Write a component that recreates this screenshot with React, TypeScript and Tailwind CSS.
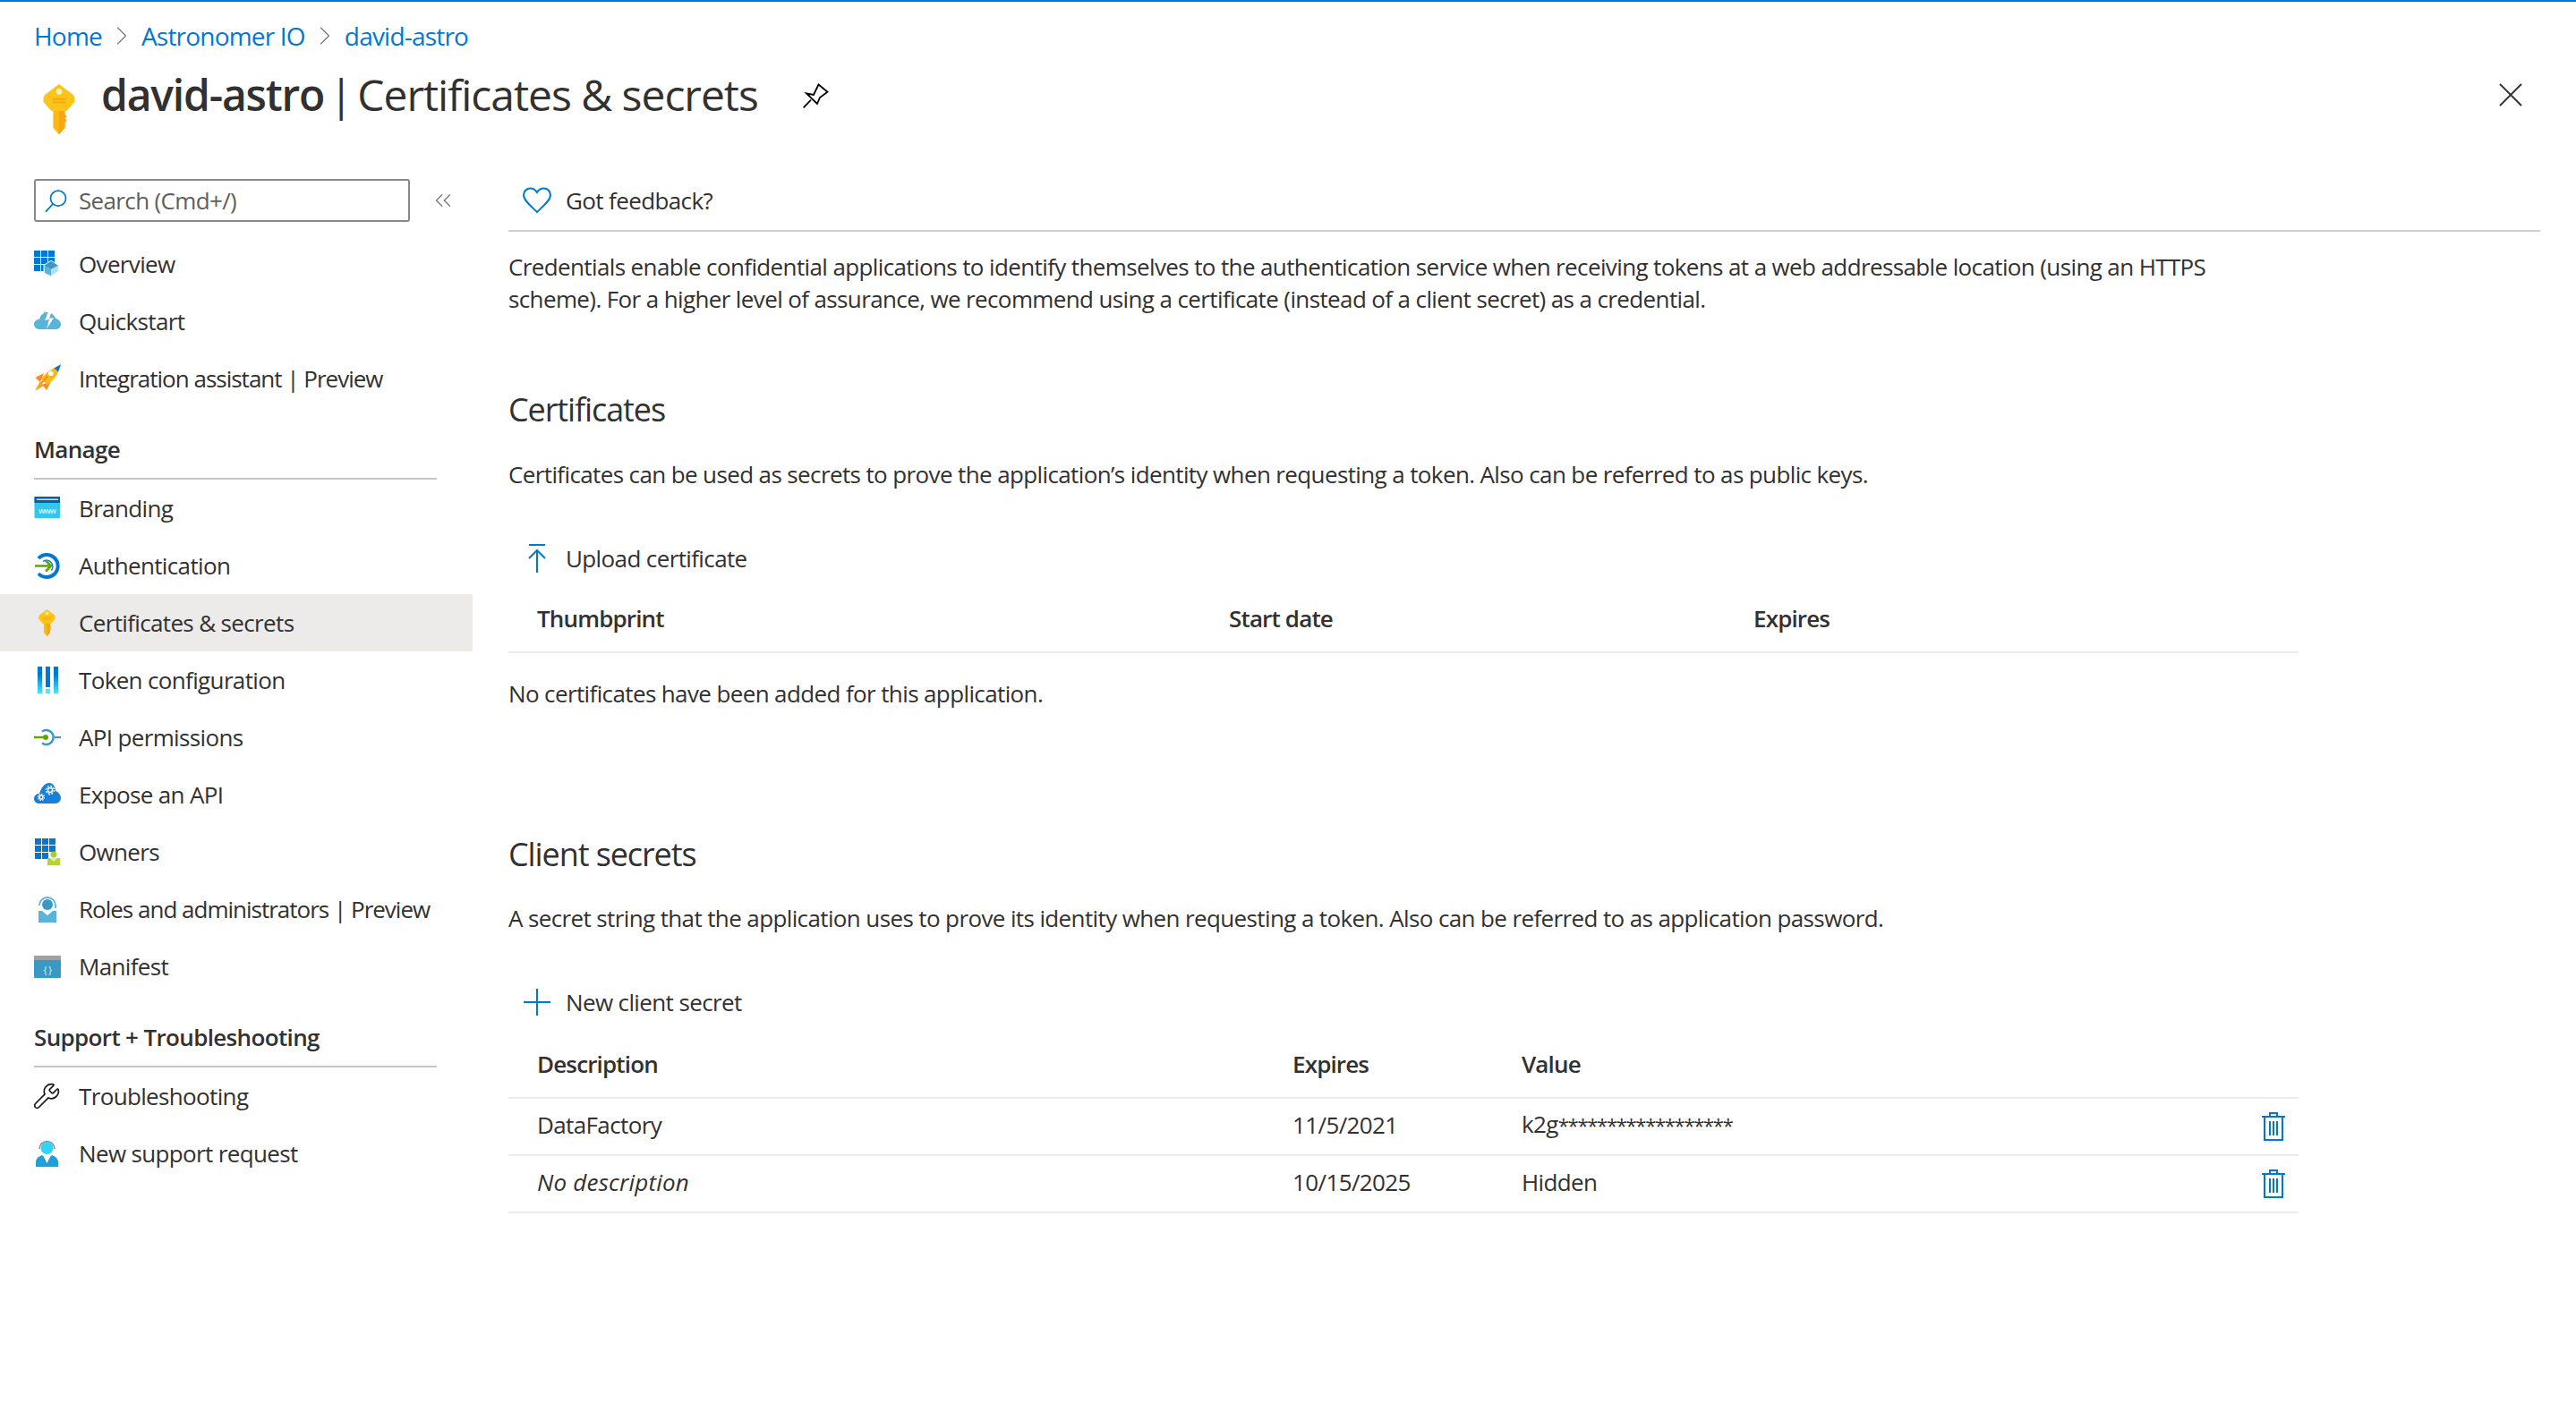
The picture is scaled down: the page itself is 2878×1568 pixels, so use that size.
import { ChevronRight, ChevronsLeft, Wrench, X } from 'lucide-react';
import React from 'react';

const KeyIcon = ({ className }: { className: string }) => (
  <svg viewBox="0 0 32 32" className={className}>
    <path d="M13 14h7v13l-3.500 4L13 27z" fill="#fcb813" />
    <path d="M20 19l1.200 1.200-1.200 1.200 1.200 1.300-1.200 1.300V27l-3.500 4v-17H20z" fill="#f7a711" />
    <path d="M16.500 1 25 7.500Q26.500 10 25.500 12L21 17H12L7.500 12Q6.500 10 8 7.500Z" fill="#fcc419" />
    <circle cx="16.500" cy="5.500" r="1.800" fill="#fff3bf" />
    <path d="M12.500 10h8M12.500 12h8" stroke="#f7a711" strokeWidth="1" />
  </svg>
);

const TrashIcon = () => (
  <svg viewBox="0 0 26 32" className="h-[32px] w-[26px]" fill="none" stroke="#0078d4" strokeWidth="2">
    <path d="M0 5h26M9 5V1h8v4M3 5v26h20V5M9 10v16M13 10v16M17 10v16" />
  </svg>
);

const navIcons: Record<string, React.ReactNode> = {
  overview: (
    <>
      {[2, 10, 18].map((x) =>
        [1, 9, 17].map((y) => <rect key={`${x}-${y}`} x={x} y={y} width="7" height="7" fill="#0078d4" />)
      )}
      <path d="M13.300 17.700L21 12.700l8 5v7l-8 5-7.700-3.500z" fill="#fff" stroke="#fff" strokeWidth="1.500" />
      <path d="M13.300 17.700L21 22v7.300L14 26z" fill="#59b4d9" />
      <path d="M29 17.700L21 22v7.300l8-5z" fill="#b3e0f2" />
      <path d="M13.300 17.700L21 12.700l8 5L21 22z" fill="#3999c6" />
    </>
  ),
  quickstart: (
    <>
      <path d="M8 25C4 25 2 22 2 19.500 2 16 5 14 8 14 9 9 13 6 17 6 21 6 25 9 26 13 29 13.500 32 16 32 19.500 32 23 29 25 26 25Z" fill="#59b4d9" />
      <path d="M19 3L14 15l5-1-3 11 8-13-5 1 3-9z" fill="#fff" />
      <path d="M14 4l-2 6 3-1z" fill="#59b4d9" />
    </>
  ),
  rocket: (
    <>
      <path d="M13 10L3.300 15 9 20zM21 19l-5 10-5-6z" fill="#f78d1e" />
      <path d="M9 19l4 5L3 30z" fill="#f9a11b" />
      <path d="M24 4.700L32 .3l-3 8.400C27 14 22 19 17 23l-7-6C13 12 18 7 24 4.700z" fill="#fcb813" />
      <path d="M24 4.700L32 .3l-3 8.400Q26 5 24 4.700z" fill="#0078d4" />
      <circle cx="20.700" cy="10.300" r="2.800" fill="#fff" />
      <path d="M10 21l7-7" stroke="#f78d1e" strokeWidth="1.800" />
    </>
  ),
  branding: (
    <>
      <rect x="2.500" y="3" width="28.500" height="24" rx="1" fill="#32c5ee" />
      <rect x="2.500" y="3" width="28.500" height="7" fill="#0a5ea8" />
      <rect x="5" y="5.500" width="24" height="1.500" fill="#c7e0f4" />
      <text x="16.700" y="22" textAnchor="middle" fontSize="9" fill="#fff" className="[font-family:'Open_Sans',sans-serif]">www</text>
    </>
  ),
  auth: (
    <>
      <path d="M7 8A12.500 12.500 0 1 1 7 25" fill="none" stroke="#0078d4" strokeWidth="4" />
      <path d="M12 11.500A7 7 0 0 1 21.500 21.500" fill="none" stroke="#0078d4" strokeWidth="1.500" />
      <path d="M3 16.500h18M15 10.500l6 6-6 6" fill="none" stroke="#5ea800" strokeWidth="2.500" />
    </>
  ),
  token: (
    <>
      <defs>
        <linearGradient id="tokenBar" x1="0" y1="0" x2="0" y2="1">
          <stop offset="0.300" stopColor="#0078d4" />
          <stop offset="1" stopColor="#50e6ff" />
        </linearGradient>
      </defs>
      <rect x="6" y="1" width="5" height="30" fill="url(#tokenBar)" />
      <rect x="15" y="1" width="5" height="23" fill="#0078d4" />
      <rect x="15" y="26" width="5" height="5" fill="#50e6ff" />
      <rect x="24" y="1" width="5" height="30" fill="url(#tokenBar)" />
    </>
  ),
  api: (
    <>
      <path d="M11 9.500A8 8 0 1 1 11 22.500" fill="none" stroke="#3999c6" strokeWidth="2.500" />
      <path d="M25 16h7" stroke="#3999c6" strokeWidth="2" />
      <path d="M2 16h12" stroke="#5ea800" strokeWidth="2.500" />
      <circle cx="15" cy="16" r="3" fill="#5ea800" />
    </>
  ),
  expose: (
    <>
      <path d="M7 26C4 26 2 23 2 20.500 2 17 5 15 8 15 10 8 14 3 19 3 23 3 26 7 26 12 29 13 32 16 32 20 32 23 29 26 26 26Z" fill="#1a7fd6" />
      <circle cx="10" cy="19" r="2" fill="none" stroke="#fff" strokeWidth="1.500" />
      <circle cx="10" cy="19" r="3.500" fill="none" stroke="#fff" strokeWidth="1.200" strokeDasharray="1.500 1.200" />
      <circle cx="20" cy="11" r="2.500" fill="none" stroke="#fff" strokeWidth="1.500" />
      <circle cx="20" cy="11" r="4.500" fill="none" stroke="#fff" strokeWidth="1.500" strokeDasharray="2 1.500" />
    </>
  ),
  owners: (
    <>
      {[3, 11, 19].map((x) => <rect key={x} x={x} y="1" width="7" height="7" fill="#0078d4" />)}
      {[3, 11, 19].map((x) => <rect key={x} x={x} y="9" width="7" height="7" fill="#0078d4" />)}
      {[3, 11].map((x) => <rect key={x} x={x} y="17" width="7" height="7" fill="#0078d4" />)}
      <circle cx="24" cy="19" r="3.500" fill="#a6ce39" />
      <path d="M17 23h14v8H17z" fill="#b8d432" />
      <path d="M20 23l4 4 4-4z" fill="#e3f0a9" />
    </>
  ),
  roles: (
    <>
      <path d="M8 12A9 9 0 0 1 26 12v3" fill="none" stroke="#59b4d9" strokeWidth="1.800" />
      <circle cx="17" cy="11" r="6" fill="#3999c6" />
      <path d="M7 18h20v13H7z" fill="#59b4d9" />
      <path d="M11 18l6 5 6-5z" fill="#fff" />
    </>
  ),
  manifest: (
    <>
      <rect x="2" y="4" width="30" height="25" rx="1" fill="#3999c6" />
      <rect x="2" y="4" width="30" height="5" fill="#a0a1a2" />
      <text x="17" y="24" textAnchor="middle" fontSize="11" fill="#d6eef8" className="[font-family:'Open_Sans',sans-serif]">{'{ }'}</text>
    </>
  ),
  support: (
    <>
      <path d="M8 11A8.500 8.500 0 0 1 25 11" fill="none" stroke="#8a8886" strokeWidth="1.500" />
      <circle cx="16.500" cy="10" r="7" fill="#32d4f5" />
      <path d="M4 31V25Q5 20 11 18L16.500 23 22 18Q28 20 29 25V31Z" fill="#1f9fd6" />
      <path d="M13 20h7l-3.500 7z" fill="#fff" />
    </>
  ),
};

const NavRow = ({
  icon,
  label,
  active,
  tight,
}: {
  icon: React.ReactNode;
  label: string;
  active?: boolean;
  tight?: boolean;
}) => (
  <div className={`flex h-[64px] items-center gap-[20px] pl-[36px] ${active ? 'bg-[#edebe9]' : ''}`}>
    {icon}
    <span className={`whitespace-nowrap ${tight ? 'tracking-[-1px]' : ''}`}>{label}</span>
  </div>
);

const SvgIcon = ({ name }: { name: string }) => (
  <svg viewBox="0 0 32 32" className="h-[32px] w-[32px] shrink-0">
    {navIcons[name]}
  </svg>
);

const NavHeading = ({ label }: { label: string }) => (
  <div className="mr-[40px] ml-[38px] flex h-[81px] items-end border-b-2 border-[#c8c6c4] pb-[14px] font-semibold">
    {label}
  </div>
);

const TableRow = ({ children, header }: { children: React.ReactNode; header?: boolean }) => (
  <div
    className={`flex h-[64px] w-[2000px] items-center border-b-2 border-[#edebe9] pl-[32px] ${
      header ? 'pb-[12px] font-semibold tracking-[-0.85px]' : ''
    }`}
  >
    {children}
  </div>
);

const CommandButton = ({ icon, label, className }: { icon: React.ReactNode; label: string; className: string }) => (
  <div className={`flex h-[48px] items-center gap-[15px] pl-[15px] ${className}`}>
    <span className="flex w-[34px] justify-center">{icon}</span>
    <span className="-mt-[1px]">{label}</span>
  </div>
);

const App = () => {
  return (
    <div className="h-[1568px] overflow-hidden bg-white text-[26px] leading-[36px] tracking-[-0.65px] text-[#323130] [font-family:'Open_Sans',sans-serif]">
      <div className="h-[2px] bg-[#0078d4]" />

      <div className="flex h-[76px] items-center pl-[38px] text-[28px] tracking-[-0.8px] text-[#0078d4]">
        <span>Home</span>
        <ChevronRight className="mx-[4px] h-[36px] w-[36px] text-[#797775]" strokeWidth={0.8} />
        <span>Astronomer IO</span>
        <ChevronRight className="mx-[4px] h-[36px] w-[36px] text-[#797775]" strokeWidth={0.8} />
        <span>david-astro</span>
      </div>

      <div className="flex h-[56px] items-center pr-[50px] pl-[35px]">
        <KeyIcon className="-mb-[32px] h-[60px] w-[60px] shrink-0" />
        <h1 className="ml-[18px] whitespace-nowrap text-[48px] leading-[56px] tracking-[-1.2px]">
          <span className="font-semibold">david-astro</span>
          <span className="mr-[6px] ml-[6px]">|</span>
          <span className="tracking-[-1.03px]">Certificates &amp; secrets</span>
        </h1>
        <svg viewBox="0 0 60 50" className="ml-[34px] h-[50px] w-[60px]" fill="none" stroke="#000" strokeWidth="1.800">
          <path d="M16.700 39.300L25 30.700M20 23.500L28 25 33.500 13.500 43.500 21.700 35 28 32 35z" />
        </svg>
        <X className="ml-auto h-[46px] w-[46px] text-[#323130]" strokeWidth={1} />
      </div>

      <div className="mt-[66px] flex">
        <aside className="w-[528px] shrink-0">
          <div className="flex h-[48px] items-center">
            <div className="ml-[38px] flex h-[48px] w-[420px] items-center gap-[12px] rounded-[3px] border-2 border-[#8a8886] pl-[10px] text-[#605e5c]">
              <svg viewBox="0 0 26 26" className="h-[26px] w-[26px]" fill="none" stroke="#0078d4" strokeWidth="1.800">
                <circle cx="15" cy="10.700" r="8.500" />
                <path d="M1 25.700L9 17" />
              </svg>
              <span className="-mt-[1px]">Search (Cmd+/)</span>
            </div>
            <ChevronsLeft className="ml-[22px] h-[30px] w-[30px] text-[#797775]" strokeWidth={1} />
          </div>

          <div className="mt-[15px]">
            <NavRow icon={<SvgIcon name="overview" />} label="Overview" />
            <NavRow icon={<SvgIcon name="quickstart" />} label="Quickstart" />
            <NavRow icon={<SvgIcon name="rocket" />} label="Integration assistant | Preview" tight />
          </div>

          <NavHeading label="Manage" />
          <NavRow icon={<SvgIcon name="branding" />} label="Branding" />
          <NavRow icon={<SvgIcon name="auth" />} label="Authentication" />
          <NavRow icon={<KeyIcon className="h-[32px] w-[32px] shrink-0" />} label="Certificates & secrets" active />
          <NavRow icon={<SvgIcon name="token" />} label="Token configuration" />
          <NavRow icon={<SvgIcon name="api" />} label="API permissions" />
          <NavRow icon={<SvgIcon name="expose" />} label="Expose an API" />
          <NavRow icon={<SvgIcon name="owners" />} label="Owners" />
          <NavRow icon={<SvgIcon name="roles" />} label="Roles and administrators | Preview" tight />
          <NavRow icon={<SvgIcon name="manifest" />} label="Manifest" />

          <NavHeading label="Support + Troubleshooting" />
          <NavRow icon={<Wrench className="h-[32px] w-[32px] shrink-0 text-[#1b1a19]" strokeWidth={1.3} />} label="Troubleshooting" />
          <NavRow icon={<SvgIcon name="support" />} label="New support request" />
        </aside>

        <main className="min-w-0 flex-1 pr-[40px] pl-[40px] tracking-[-0.62px]">
          <div className="flex h-[59px] items-start border-b-2 border-[#d2d0ce]">
            <CommandButton
              className=""
              label="Got feedback?"
              icon={
                <svg viewBox="0 0 34 30" className="h-[30px] w-[34px]" fill="none" stroke="#0078d4" strokeWidth="2">
                  <path d="M17 28C11 22 2 15 2 9 2 4 6 1.500 9.500 1.500 13 1.500 15.500 3.500 17 6 18.500 3.500 21 1.500 24.500 1.500 28 1.500 32 4 32 9 32 15 23 22 17 28Z" />
                </svg>
              }
            />
          </div>

          <p className="mt-[21px] whitespace-nowrap">
            Credentials enable confidential applications to identify themselves to the authentication service when receiving tokens at a web addressable location (using an HTTPS
            <br />
            scheme). For a higher level of assurance, we recommend using a certificate (instead of a client secret) as a credential.
          </p>

          <h2 className="mt-[82px] text-[36px] leading-[48px] tracking-[-1.1px]">Certificates</h2>
          <p className="mt-[30px] whitespace-nowrap">
            Certificates can be used as secrets to prove the application’s identity when requesting a token. Also can be referred to as public keys.
          </p>
          <CommandButton
            className="mt-[52px]"
            label="Upload certificate"
            icon={
              <svg viewBox="0 0 20 32" className="h-[32px] w-[20px]" fill="none" stroke="#0078d4" strokeWidth="2">
                <path d="M1 1h18M10 32V7M1 16l9-9 9 9" />
              </svg>
            }
          />
          <div className="mt-[18px]">
            <TableRow header>
              <span className="w-[773px]">Thumbprint</span>
              <span className="w-[586px]">Start date</span>
              <span>Expires</span>
            </TableRow>
          </div>
          <p className="mt-[27px]">No certificates have been added for this application.</p>

          <h2 className="mt-[138px] text-[36px] leading-[48px] tracking-[-1.1px]">Client secrets</h2>
          <p className="mt-[29px] whitespace-nowrap">
            A secret string that the application uses to prove its identity when requesting a token. Also can be referred to as application password.
          </p>
          <CommandButton
            className="mt-[52px]"
            label="New client secret"
            icon={
              <svg viewBox="0 0 30 30" className="h-[30px] w-[30px]" fill="none" stroke="#0078d4" strokeWidth="2">
                <path d="M0 15h30M15 0v30" />
              </svg>
            }
          />
          <div className="mt-[20px]">
            <TableRow header>
              <span className="w-[844px]">Description</span>
              <span className="w-[256px]">Expires</span>
              <span>Value</span>
            </TableRow>
            <TableRow>
              <span className="-mt-[5px] w-[844px]">DataFactory</span>
              <span className="-mt-[5px] w-[256px]">11/5/2021</span>
              <span className="-mt-[5px]">
                k2g<span className="text-[22px] tracking-[-1.300px]">******************</span>
              </span>
              <span className="mr-[15px] ml-auto flex"><TrashIcon /></span>
            </TableRow>
            <TableRow>
              <span className="-mt-[5px] w-[844px] tracking-[0.2px] italic">No description</span>
              <span className="-mt-[5px] w-[256px]">10/15/2025</span>
              <span className="-mt-[5px]">Hidden</span>
              <span className="mr-[15px] ml-auto flex"><TrashIcon /></span>
            </TableRow>
          </div>
        </main>
      </div>
    </div>
  );
};

export default App;
